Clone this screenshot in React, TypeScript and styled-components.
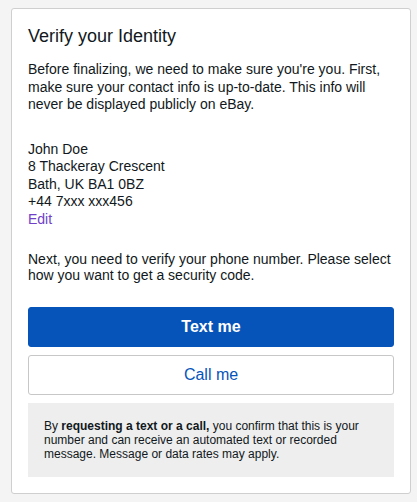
import styled, { createGlobalStyle } from 'styled-components';

const GlobalStyle = createGlobalStyle`
  html, body {
    margin: 0;
    padding: 0;
    background: #f4f4f4;
  }
  body {
    padding: 8px 6px 8px 11px;
    font-family: Arial, 'Liberation Sans', Helvetica, sans-serif;
    color: #111820;
  }
`;

const address = ['John Doe', '8 Thackeray Crescent', 'Bath, UK BA1 0BZ', '+44 7xxx xxx456'];

export default function App() {
  return (
    <>
      <GlobalStyle />
      <Card>
        <Title>Verify your Identity</Title>
        <Intro>
          Before finalizing, we need to make sure you're you. First, make sure your contact info is
          up-to-date. This info will never be displayed publicly on eBay.
        </Intro>
        <Address>
          {address.map((line) => (
            <span key={line}>{line}</span>
          ))}
          <EditLink href="#">Edit</EditLink>
        </Address>
        <Prompt>
          Next, you need to verify your phone number. Please select how you want to get a security
          code.
        </Prompt>
        <Actions>
          <ActionButton $primary>Text me</ActionButton>
          <ActionButton>Call me</ActionButton>
        </Actions>
        <Notice>
          By <strong>requesting a text or a call,</strong> you confirm that this is your number and
          can receive an automated text or recorded message. Message or data rates may apply.
        </Notice>
      </Card>
    </>
  );
}

const Card = styled('div')`
  width: 400px;
  box-sizing: border-box;
  background: #ffffff;
  border: 1px solid #cfcfcf;
  border-radius: 3px;
  padding: 16px 16px 16px 16px;
  display: flex;
  flex-direction: column;
`;

const Title = styled('h1')`
  margin: 0 0 14px;
  font-size: 18px;
  line-height: 22px;
  font-weight: normal;
`;

const Intro = styled('p')`
  margin: 0 0 27px;
  font-size: 14px;
  line-height: 17.5px;
`;

const Address = styled('div')`
  display: flex;
  flex-direction: column;
  align-items: flex-start;
  font-size: 14px;
  line-height: 17.5px;
  margin-bottom: 23px;
`;

const EditLink = styled('a')`
  color: #7040c8;
  text-decoration: none;
`;

const Prompt = styled('p')`
  margin: 0 0 24px;
  font-size: 14px;
  line-height: 16px;
`;

const Actions = styled('div')`
  display: flex;
  flex-direction: column;
  gap: 8px;
  margin-bottom: 8px;
`;

const ActionButton = styled('button')<{ $primary?: boolean }>`
  height: 40px;
  width: 100%;
  border-radius: 3px;
  font-family: inherit;
  font-size: 16px;
  cursor: pointer;
  border: 1px solid ${({ $primary }) => ($primary ? '#0654ba' : '#c7c7c7')};
  background: ${({ $primary }) => ($primary ? '#0654ba' : '#ffffff')};
  color: ${({ $primary }) => ($primary ? '#ffffff' : '#0654ba')};
  font-weight: ${({ $primary }) => ($primary ? 'bold' : 'normal')};
`;

const Notice = styled('p')`
  margin: 0;
  background: #eeeeee;
  padding: 16px;
  font-size: 12px;
  line-height: 14px;
  strong {
    font-weight: bold;
  }
`;
